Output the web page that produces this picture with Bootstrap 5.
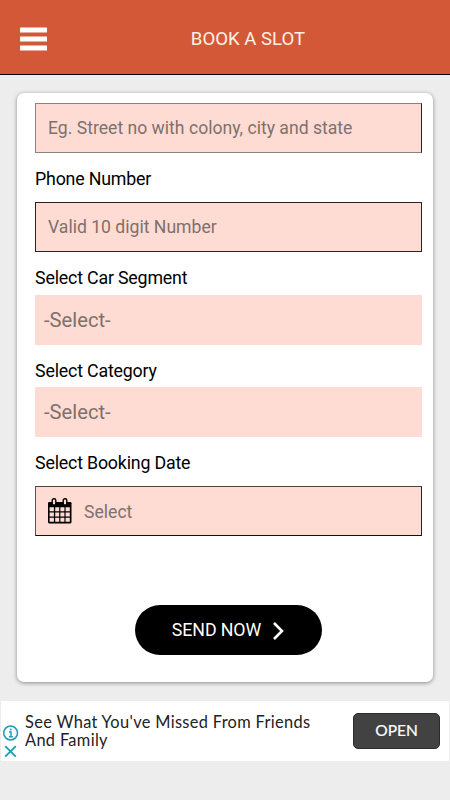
<!DOCTYPE html>
<html lang="en">
<head>
<meta charset="utf-8">
<meta name="viewport" content="width=device-width, initial-scale=1">
<title>Book a slot</title>
<link href="https://cdn.jsdelivr.net/npm/bootstrap@5.3.0/dist/css/bootstrap.min.css" rel="stylesheet">
<style>
body{background:#ededed;font-family:Roboto,"Liberation Sans",sans-serif;color:#000;height:800px;overflow:hidden}
.topbar{height:75px;background:#d35838;border-bottom:1px solid #000;padding:3px 20px 0}
.topbar-title{font-size:18.6px;color:#fff0e2;left:0;right:0;padding-left:46px;line-height:24px}
.booking{margin:18px 17px 0;height:589px;padding:10px 11px 0 18px;border-radius:7px;box-shadow:0 1px 4px rgba(0,0,0,.42)}
.field{height:50px;background:#fedcd4;color:#7e706c;font-size:17.6px;padding-left:13px;flex:none}
.boxed{border:1px solid #2b2121;padding-left:12px}
.soft{border-color:#8b8280 #2b2121 #8b8280 #8b8280;padding-top:1px}
.dated{border-color:#4b4342 #2b2121 #111 #5b5352;padding:0 0 0 11px}
.pick{font-size:20.2px;padding:1px 0 0 9px}
.field-label{font-size:17.8px;letter-spacing:-.18px;line-height:24px;flex:none;padding:14px 0 5px}
.label-phone{padding:14px 0 11px}
.label-category{padding-bottom:4px}
.label-date{padding-bottom:11px}
.date-text{padding:2px 0 0 12px}
.send{width:187px;height:50px;background:#000;color:#fff;font-size:17.8px;letter-spacing:-.1px;margin-top:68.5px;padding:2px 0 0 2px}
.ad{height:60px;margin:19px 1px 0;padding-right:9px}
.ad-marks{width:24px;padding:24px 0 0 1px}
.ad-copy{font-family:Lato,sans-serif;font-size:16.4px;letter-spacing:.33px;line-height:18px;color:#222}
.ad-open{width:87px;height:36px;background:#424242;border:1px solid #2c2c2c;border-radius:5px;color:#fff;font-family:Lato,sans-serif;font-size:15.5px;-webkit-text-stroke:.2px #fff}
</style>
</head>
<body>
<header class="topbar d-flex align-items-center position-relative">
  <svg width="28" height="24" viewBox="0 0 28 24" fill="#fff" aria-label="Menu"><rect y="0.5" width="27" height="5" rx=".6"/><rect y="9.5" width="27" height="5" rx=".6"/><rect y="18.5" width="27" height="5" rx=".6"/></svg>
  <div class="topbar-title position-absolute text-center">BOOK A SLOT</div>
</header>
<main class="booking bg-white d-flex flex-column">
  <div class="field boxed soft d-flex align-items-center">Eg. Street no with colony, city and state</div>
  <div class="field-label label-phone">Phone Number</div>
  <div class="field boxed d-flex align-items-center">Valid 10 digit Number</div>
  <div class="field-label">Select Car Segment</div>
  <div class="field pick d-flex align-items-center">-Select-</div>
  <div class="field-label label-category">Select Category</div>
  <div class="field pick d-flex align-items-center">-Select-</div>
  <div class="field-label label-date">Select Booking Date</div>
  <div class="field boxed dated d-flex align-items-center">
    <svg width="25" height="26" viewBox="0 0 25 26" aria-hidden="true">
      <rect x="1" y="4" width="23.5" height="21.4" rx="1.3"/>
      <g fill="#fedcd4">
        <path d="M2.6 9.2h4.3v4H2.6zM8.2 9.2h4v4h-4zM13.4 9.2h4v4h-4zM18.6 9.2h4.2v4h-4.2zM2.6 14.5h4.3v4H2.6zM8.2 14.5h4v4h-4zM13.4 14.5h4v4h-4zM18.6 14.5h4.2v4h-4.2zM2.6 19.8h4.3v4H2.6zM8.2 19.8h4v4h-4zM13.4 19.8h4v4h-4zM18.6 19.8h4.2v4h-4.2z"/>
        <rect x="5.2" y="0.8" width="3.6" height="6.2" rx="1.6" stroke="#000" stroke-width="1.4"/>
        <rect x="16.2" y="0.8" width="3.6" height="6.2" rx="1.6" stroke="#000" stroke-width="1.4"/>
      </g>
    </svg>
    <span class="date-text">Select</span>
  </div>
  <div class="send rounded-pill d-flex align-items-center justify-content-center align-self-center">
    <span>SEND NOW</span>
    <svg class="ms-2" width="18" height="20" viewBox="0 0 18 20" fill="none" stroke="#fff" stroke-width="2.6" aria-hidden="true"><path d="M5 2l8 8-8 8"/></svg>
  </div>
</main>
<aside class="ad bg-white d-flex">
  <div class="ad-marks">
    <svg class="d-block" width="17" height="34" viewBox="0 0 17 34" fill="none" stroke="#1a9db4" stroke-width="1.5" aria-label="Ad choices"><circle cx="8.6" cy="8" r="6.9"/><path d="M7 7h2v4.6M6.9 11.8h4" stroke-width="1.4"/><circle cx="8.7" cy="4.4" r="1" fill="#1a9db4" stroke="none"/><path d="M3.2 21.2l10.6 10.4M13.8 21.2L3.2 31.6" stroke-width="1.8"/></svg>
  </div>
  <div class="ad-copy flex-grow-1 align-self-center text-nowrap">See What You've Missed From Friends<br>And Family</div>
  <div class="ad-open d-flex align-items-center justify-content-center align-self-center">OPEN</div>
</aside>
<script src="https://cdn.jsdelivr.net/npm/bootstrap@5.3.0/dist/js/bootstrap.bundle.min.js"></script>
</body>
</html>
